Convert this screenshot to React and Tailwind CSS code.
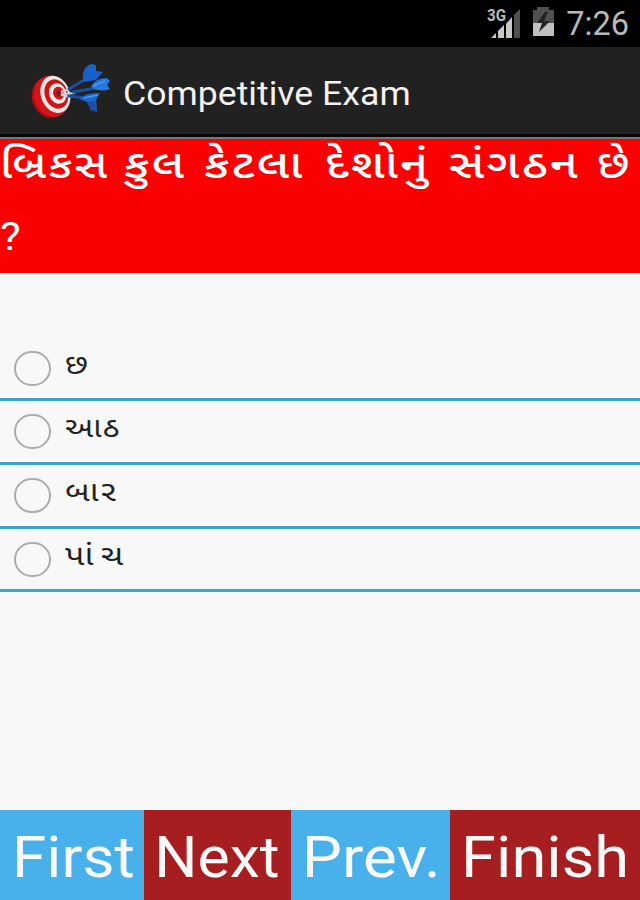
const words = [
  { text: "બ્રિકસ", box: "w-[124px]", scale: "scale-x-[1.16]" },
  { text: "કુલ", box: "w-[80px]", scale: "scale-x-[1.25]" },
  { text: "કેટલા", box: "w-[121px]", scale: "scale-x-[1.25]" },
  { text: "દેશોનું", box: "w-[124px]", scale: "scale-x-[1.25]" },
  { text: "સંગઠન", box: "w-[148px]", scale: "scale-x-[1.25]" },
  { text: "છે", box: "w-[32px]", scale: "scale-x-[1.1]" },
];

const options = [
  { text: "છ", scale: "scale-x-[1.1]", tracking: "tracking-[1px]" },
  { text: "આઠ", scale: "scale-x-[1.14]", tracking: "tracking-[1px]" },
  { text: "બાર", scale: "scale-x-[1.2]", tracking: "tracking-[2px]" },
  { text: "પાંચ", scale: "scale-x-[1.22]", tracking: "tracking-[6px]" },
];

function StatusIcons() {
  return (
    <svg width="72" height="36" viewBox="0 0 72 36" className="block">
      <text x="0" y="16" fontFamily="Roboto, sans-serif" fontSize="16.5" fontWeight="700" fill="#b8b8b8" textLength="19" lengthAdjust="spacingAndGlyphs">3G</text>
      <path d="M4 33 L9 28 V33 Z M11 26 L17 20 V33 H11 Z M19 19 L25 12 V33 H19 Z" fill="#c8c8c8" />
      <path d="M27 10 L33 4 V33 H27 Z" fill="#505050" />
      <path d="M46 5 H50 V2 H62 V5 H67 V19 H46 Z" fill="#505050" />
      <path d="M46 18 H67 V31 H46 Z" fill="#c0c0c0" />
      <path d="M58 7 L50 18 H55 L52 27 L63 16 H57 L61 7 Z" fill="#222" />
    </svg>
  );
}

function Logo() {
  return (
    <svg width="84" height="64" viewBox="0 0 84 64" className="block">
      <g transform="rotate(-20 24 36)">
        <ellipse cx="22" cy="36" rx="17" ry="20.5" fill="#b30d12" />
        <ellipse cx="25" cy="35.5" rx="17.5" ry="21" fill="#d61317" />
        <ellipse cx="29" cy="35" rx="14.5" ry="19" fill="#eee7e4" />
        <ellipse cx="30" cy="35" rx="11.5" ry="15" fill="#cf1518" />
        <ellipse cx="31.5" cy="35" rx="8.5" ry="10.5" fill="#f1ebe8" />
        <ellipse cx="32.5" cy="35" rx="5.5" ry="6.5" fill="#c91519" />
        <ellipse cx="32.5" cy="35" rx="2" ry="2.5" fill="#641e23" />
      </g>
      <path d="M34 31 L44 27 M34 33 L48 32 M34 34 L45 36" stroke="#cbd2db" strokeWidth="2" />
      <path d="M42 28 L57 19 M46 31 L69 27 M42 35 L59 37" stroke="#164fa5" strokeWidth="3" strokeLinecap="round" />
      <path d="M56 21 L56 12 Q58 4 65 3 L69 4 L69 10 L76 11 L69 19 Z" fill="#1761ca" />
      <path d="M64 26 Q68 17 80 17 L83 20 L80 24 L83 28 Q73 32 64 26" fill="#2479e1" />
      <path d="M52 38 Q60 31 73 32 L69 39 L70 51 L64 49 L60 41 Z" fill="#1b66cc" />
      <path d="M66 25 L78 20 M57 37 L71 34" stroke="#4b9bf2" strokeWidth="1.5" />
      <path d="M60 41 L68 40 L70 51 L64 49 Z" fill="#1450a8" />
    </svg>
  );
}

export default function App() {
  return (
    <div className="flex h-[900px] w-[640px] flex-col overflow-hidden bg-[#f8f8f8] font-['Roboto','Noto_Sans_Gujarati','Noto_Sans',sans-serif]">
      <header className="flex h-[47px] shrink-0 items-start justify-end bg-black pr-[11px] pt-[5px]">
        <StatusIcons />
        <span className="ml-[7px] mt-[1px] text-[32.5px] leading-[36px] text-[#b9b9b9]">7:26</span>
      </header>
      <div className="flex h-[92px] shrink-0 items-start border-b-2 border-[#777] bg-[#212121] pl-[27px] pt-[14px] shadow-[inset_0_-3px_0_#080808]">
        <Logo />
        <h1 className="ml-[12px] mt-[12px] origin-left scale-x-[1.048] whitespace-nowrap text-[34px] leading-[40px] text-[#f2f2f2]">Competitive Exam</h1>
      </div>
      <section className="h-[134px] shrink-0 bg-[#fb0000] text-[39px] text-white">
        <p className="flex h-[62px] whitespace-nowrap font-medium leading-[52px] tracking-[2px]">
          {words.map(({ text, box, scale }) => (
            <span key={text} className={`${box} shrink-0`}>
              <span className={`${scale} inline-block origin-left`}>{text}</span>
            </span>
          ))}
        </p>
        <p className="w-fit origin-left scale-x-[1.12] text-[39px] leading-[72px]">?</p>
      </section>
      <main className="flex flex-1 flex-col pt-[64.5px]">
        {options.map(({ text, scale, tracking }) => (
          <label key={text} className="flex h-[63.7px] items-start border-b-[3px] border-[#38a7d3] pl-[14px] text-[28px] leading-[36px] text-[#222]">
            <span className="mt-[13px] h-[35px] w-[37px] rounded-full border-2 border-[#acacac]" />
            <span className={`${scale} ${tracking} ml-[14px] mt-[9px] origin-left`}>{text}</span>
          </label>
        ))}
      </main>
      <footer className="flex h-[90px] shrink-0 text-[58px] leading-[95px] text-[#fafafa]">
        <button className="flex w-[144px] justify-center bg-[#48b0ea] pl-[3px]"><span className="scale-x-[1.07]">First</span></button>
        <button className="flex w-[147px] justify-center bg-[#a71e20] pr-[2px]"><span className="scale-x-[1.045]">Next</span></button>
        <button className="flex w-[159px] justify-center bg-[#48b0ea] pl-[2px]"><span className="scale-x-[1.1]">Prev.</span></button>
        <button className="flex w-[190px] justify-center bg-[#a71e20]"><span className="scale-x-[1.09]">Finish</span></button>
      </footer>
    </div>
  );
}
